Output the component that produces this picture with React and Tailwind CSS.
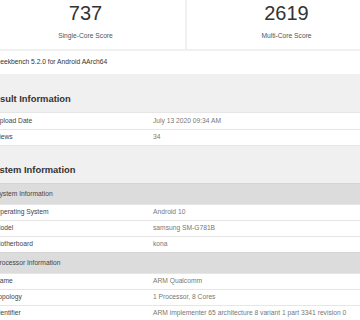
export default function App() {
  const font = { fontFamily: '"Liberation Sans", Arial, sans-serif' };
  const Row = ({ label, value, h = "h-[16px]" }) => (
    <div className={`flex items-center ${h} bg-white border-t border-[#e6e6e6]`}>
      <div className="w-[165px] pl-[7px] text-[6.7px] text-[#444] whitespace-nowrap">{label}</div>
      <div className="pl-[0px] text-[6.7px] text-[#777] whitespace-nowrap">{value}</div>
    </div>
  );
  const Header = ({ label }) => (
    <div className="flex items-center h-[21px] bg-[#dcdcdc] border-t border-[#d4d4d4] pl-[7px] text-[6.7px] text-[#444] whitespace-nowrap">
      {label}
    </div>
  );
  return (
    <div className="w-[360px] h-[320px] overflow-hidden bg-[#f0f0f0]" style={font}>
      <div className="ml-[-14px] w-[400px]">
        <div className="grid grid-cols-2 gap-[2px]">
          <div className="h-[49px] bg-white flex flex-col items-center">
            <div className="text-[20px] leading-[20px] mt-[3px] text-[#333] font-light">737</div>
            <div className="text-[6.7px] mt-[8px] text-[#555]">Single-Core Score</div>
          </div>
          <div className="h-[49px] bg-white flex flex-col items-center">
            <div className="text-[20px] leading-[20px] mt-[3px] text-[#333] font-light">2619</div>
            <div className="text-[6.7px] mt-[8px] text-[#555]">Multi-Core Score</div>
          </div>
        </div>
        <div className="mt-[2px] h-[23px] bg-white flex items-center pl-[9px] text-[6.7px] text-[#333] whitespace-nowrap">
          Geekbench 5.2.0 for Android AArch64
        </div>
        <div className="pl-[2px] mt-[18px] h-[14px] flex items-center text-[9.4px] font-bold text-[#333] whitespace-nowrap">
          Result Information
        </div>
        <div className="ml-[2px] mt-[6px] border-b border-[#e6e6e6]">
          <Row label="Upload Date" value="July 13 2020 09:34 AM" h="h-[17px]" />
          <Row label="Views" value="34" />
        </div>
        <div className="pl-[2px] mt-[17px] h-[14px] flex items-center text-[9.4px] font-bold text-[#333] whitespace-nowrap">
          System Information
        </div>
        <div className="ml-[2px] mt-[6px]">
          <Header label="System Information" />
          <Row label="Operating System" value="Android 10" />
          <Row label="Model" value="samsung SM-G781B" />
          <Row label="Motherboard" value="kona" />
          <Header label="Processor Information" />
          <Row label="Name" value="ARM Qualcomm" />
          <Row label="Topology" value="1 Processor, 8 Cores" />
          <Row label="Identifier" value="ARM implementer 65 architecture 8 variant 1 part 3341 revision 0" />
        </div>
      </div>
    </div>
  );
}
